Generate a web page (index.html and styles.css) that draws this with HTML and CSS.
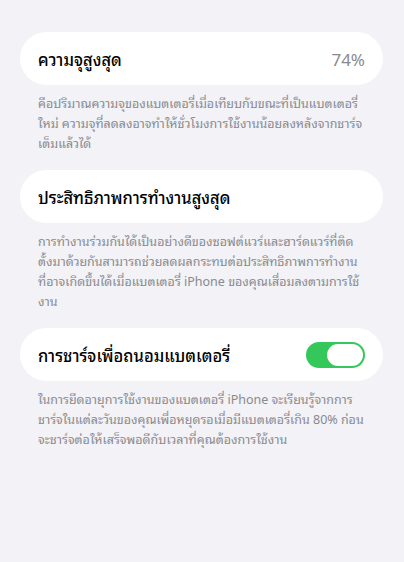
FILE: index.html
```html
<!DOCTYPE html>
<html lang="th">
<head>
    <meta charset="UTF-8">
    <meta name="viewport" content="width=device-width, initial-scale=1.0">
    <title>สุขภาพแบตเตอรี่</title>
    <link rel="stylesheet" href="styles.css">
</head>
<body>
    <div class="settings">
        <div class="row">
            <span class="row-title">ความจุสูงสุด</span>
            <span class="row-value">74%</span>
        </div>
        <p class="footnote">คือปริมาณความจุของแบตเตอรี่เมื่อเทียบกับขณะที่เป็นแบตเตอรี่ใหม่ ความจุที่ลดลงอาจทำให้ชั่วโมงการใช้งานน้อยลงหลังจากชาร์จเต็มแล้วได้</p>

        <div class="row">
            <span class="row-title">ประสิทธิภาพการทำงานสูงสุด</span>
        </div>
        <p class="footnote">การทำงานร่วมกันได้เป็นอย่างดีของซอฟต์แวร์และฮาร์ดแวร์ที่ติดตั้งมาด้วยกันสามารถช่วยลดผลกระทบต่อประสิทธิภาพการทำงานที่อาจเกิดขึ้นได้เมื่อแบตเตอรี่ iPhone ของคุณเสื่อมลงตามการใช้งาน</p>

        <div class="row">
            <span class="row-title">การชาร์จเพื่อถนอมแบตเตอรี่</span>
            <label class="switch">
                <input type="checkbox" checked>
                <span class="knob"></span>
            </label>
        </div>
        <p class="footnote">ในการยืดอายุการใช้งานของแบตเตอรี่ iPhone จะเรียนรู้จากการชาร์จในแต่ละวันของคุณเพื่อหยุดรอเมื่อมีแบตเตอรี่เกิน 80% ก่อนจะชาร์จต่อให้เสร็จพอดีกับเวลาที่คุณต้องการใช้งาน</p>
    </div>
</body>
</html>
```

FILE: styles.css
```css
* {
    margin: 0;
    padding: 0;
    box-sizing: border-box;
}
body {
    font-family: "Noto Sans Thai Looped", "Noto Sans", "Noto Sans Thai", sans-serif;
    background: #f2f2f7;
    color: #000;
    height: 100vh;
}
.settings {
    padding: 32px 21px 0 20px;
}
.row {
    display: flex;
    align-items: center;
    justify-content: space-between;
    height: 53px;
    padding: 0 18px;
    background: white;
    border-radius: 27px;
}
.row-title {
    font-size: 16.5px;
    font-weight: 500;
}
.row-value {
    font-size: 17px;
    color: #8a8a8e;
}
.footnote {
    padding: 7px 18px 0;
    margin-bottom: 18px;
    font-size: 12.5px;
    line-height: 20px;
    color: #8a8a8e;
}
.switch {
    position: relative;
    display: block;
    width: 59px;
    height: 26px;
}
.switch input {
    display: none;
}
.knob {
    display: block;
    width: 100%;
    height: 100%;
    border-radius: 13px;
    background: #34c759;
}
.knob::after {
    content: '';
    position: absolute;
    right: 2px;
    top: 2px;
    width: 36px;
    height: 22px;
    border-radius: 11px;
    background: white;
}
```
